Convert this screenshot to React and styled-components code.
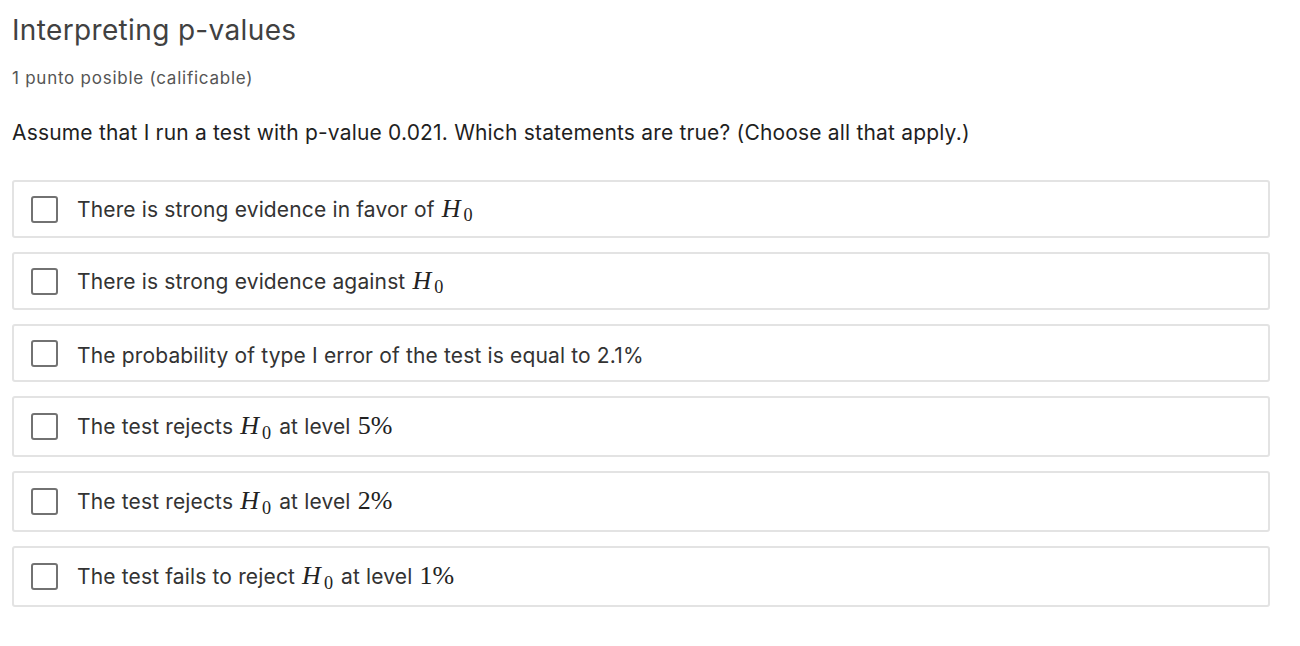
import React from 'react'
import styled, { createGlobalStyle } from 'styled-components'

const GlobalStyle = createGlobalStyle`
  body {
    margin: 0;
    background: #fff;
    font-family: Inter, "Open Sans", sans-serif;
  }
`

const Page = styled.div`
  padding: 12px 30px 0 12px;
`

const Title = styled.h2`
  margin: 0;
  font-size: 28px;
  font-weight: 400;
  letter-spacing: 0.35px;
  color: #414141;
  line-height: 36px;
`

const Meta = styled.div`
  margin-top: 19px;
  font-size: 17px;
  letter-spacing: 0.75px;
  color: #555;
  line-height: 22px;
`

const Prompt = styled.p`
  margin: 31px 0 0;
  font-size: 21px;
  letter-spacing: 0.18px;
  color: #1f1f1f;
  line-height: 26px;
`

const Options = styled.div`
  margin-top: 34px;
  display: flex;
  flex-direction: column;
  gap: 14px;
`

const Option = styled.label`
  display: flex;
  align-items: center;
  gap: 19px;
  padding: 0 17px;
  border: 2px solid #e3e3e3;
  border-radius: 3px;
  box-sizing: border-box;
  height: ${({ tall }) => (tall ? 61 : 58)}px;
  cursor: pointer;
`

const Box = styled.span`
  width: 27px;
  height: 27px;
  flex: none;
  border: 2px solid #727272;
  border-radius: 3px;
  box-sizing: border-box;
  background: #fff;
`

const Label = styled.span`
  padding-top: 6px;
  font-size: 21px;
  letter-spacing: 0.15px;
  color: #333;
  line-height: 26px;
`

const Math = styled.span`
  margin: 0 2px 0 1px;
  font-family: "Liberation Serif", "DejaVu Serif", serif;
  font-size: 26px;
  letter-spacing: 0;
  color: #222;
`

const MathVar = styled.i`
  font-style: italic;
  margin-right: 2px;
`

const Sub = styled.sub`
  font-size: 0.7em;
  font-style: normal;
  vertical-align: -0.25em;
  margin-left: 1px;
`

const H0 = () => (
  <Math>
    <MathVar>H</MathVar>
    <Sub>0</Sub>
  </Math>
)

const Pct = ({ n }) => <Math>{n}%</Math>

const options = [
  { tall: false, content: <>There is strong evidence in favor of <H0 /></> },
  { tall: false, content: <>There is strong evidence against <H0 /></> },
  { tall: false, content: <>The probability of type I error of the test is equal to 2.1%</> },
  { tall: true, content: <>The test rejects <H0 /> at level <Pct n={5} /></> },
  { tall: true, content: <>The test rejects <H0 /> at level <Pct n={2} /></> },
  { tall: true, content: <>The test fails to reject <H0 /> at level <Pct n={1} /></> }
]

export default function App () {
  return (
    <Page>
      <GlobalStyle />
      <Title>Interpreting p-values</Title>
      <Meta>1 punto posible (calificable)</Meta>
      <Prompt>Assume that I run a test with p-value 0.021. Which statements are true? (Choose all that apply.)</Prompt>
      <Options>
        {options.map((opt, i) => (
          <Option key={i} tall={opt.tall}>
            <Box />
            <Label>{opt.content}</Label>
          </Option>
        ))}
      </Options>
    </Page>
  )
}
